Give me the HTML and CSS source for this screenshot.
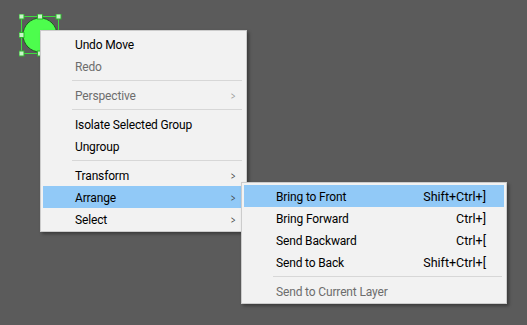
FILE: index.html
```html
<!DOCTYPE html>
<html lang="en">
<head>
    <meta charset="UTF-8">
    <title>Context Menu</title>
    <link rel="stylesheet" href="styles.css">
</head>
<body>
    <div class="canvas">
        <svg class="shape" width="50" height="50" viewBox="0 0 50 50">
            <circle cx="21" cy="21" r="17" fill="#4dfd4d" stroke="#1f5a1f" stroke-width="1"/>
            <rect x="2.5" y="2.5" width="37" height="37" fill="none" stroke="#3ddc3d" stroke-width="1"/>
            <rect x="0" y="0" width="5" height="5" class="handle"/>
            <rect x="18.5" y="0" width="5" height="5" class="handle"/>
            <rect x="37" y="0" width="5" height="5" class="handle"/>
            <rect x="0" y="18.5" width="5" height="5" class="handle"/>
            <rect x="0" y="37" width="5" height="5" class="handle"/>
            <rect x="18.5" y="37" width="5" height="5" class="handle"/>
            <rect x="37" y="37" width="5" height="5" class="handle"/>
        </svg>

        <div class="menu main-menu">
            <div class="item"><span class="label">Undo Move</span></div>
            <div class="item disabled"><span class="label">Redo</span></div>
            <div class="sep"></div>
            <div class="item disabled"><span class="label">Perspective</span><span class="arrow">&gt;</span></div>
            <div class="sep"></div>
            <div class="item"><span class="label">Isolate Selected Group</span></div>
            <div class="item"><span class="label">Ungroup</span></div>
            <div class="sep"></div>
            <div class="item"><span class="label">Transform</span><span class="arrow">&gt;</span></div>
            <div class="item active"><span class="label">Arrange</span><span class="arrow">&gt;</span></div>
            <div class="item"><span class="label">Select</span><span class="arrow">&gt;</span></div>
        </div>

        <div class="menu sub-menu">
            <div class="item active"><span class="label">Bring to Front</span><span class="shortcut">Shift+Ctrl+]</span></div>
            <div class="item"><span class="label">Bring Forward</span><span class="shortcut">Ctrl+]</span></div>
            <div class="item"><span class="label">Send Backward</span><span class="shortcut">Ctrl+[</span></div>
            <div class="item"><span class="label">Send to Back</span><span class="shortcut">Shift+Ctrl+[</span></div>
            <div class="sep"></div>
            <div class="item disabled"><span class="label">Send to Current Layer</span></div>
        </div>
    </div>
</body>
</html>
```

FILE: styles.css
```css
body {
    margin: 0;
    background-color: #5b5b5b;
    font-family: Roboto, "Noto Sans", sans-serif;
    font-size: 12px;
}
.canvas {
    position: relative;
    width: 527px;
    height: 325px;
    overflow: hidden;
}
.shape {
    position: absolute;
    left: 19px;
    top: 14px;
}
.handle {
    fill: #c8f5c8;
    stroke: #2fb52f;
    stroke-width: 1;
}
.menu {
    position: absolute;
    background-color: #f2f2f2;
    border: 1px solid #cccccc;
    padding: 2px 2px 1px;
    box-shadow: 2px 2px 3px rgba(0,0,0,0.35);
    color: #000;
}
.main-menu {
    left: 40px;
    top: 30px;
    width: 201px;
}
.sub-menu {
    left: 241px;
    top: 182px;
    width: 260px;
}
.item {
    display: flex;
    align-items: center;
    box-sizing: border-box;
    height: 22px;
    padding: 1px 8px 0 32px;
}
.item .label {
    flex: 1;
    letter-spacing: -0.15px;
}
.item.active {
    background-color: #91c9f7;
}
.item.disabled {
    color: #6d6d6d;
}
.arrow {
    font-family: "Noto Sans", sans-serif;
    font-size: 11px;
    color: #444;
    transform: scaleX(0.7);
}
.item.disabled .arrow {
    color: #9a9a9a;
}
.shortcut {
    padding-right: 10px;
    font-size: 12.5px;
}
.sep {
    height: 1px;
    background-color: #d7d7d7;
    margin: 3px 2px 3px 29px;
}
```
